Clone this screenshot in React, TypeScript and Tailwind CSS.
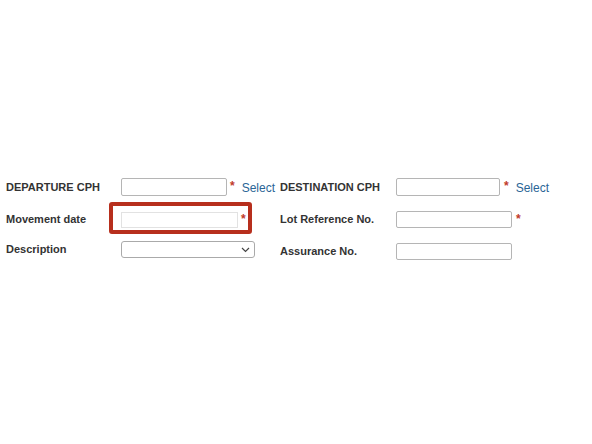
import React from 'react';

const font = { fontFamily: '"Liberation Sans", Arial, sans-serif' };

function Req() {
  return <span className="text-[12px] font-bold leading-none text-[#c0392b]">*</span>;
}

function Select() {
  return <span className="text-[12px] leading-none text-[#2a6596]">Select</span>;
}

function Label({ children, w }: { children: React.ReactNode; w: string }) {
  return (
    <div className={`${w} shrink-0 text-[11px] font-bold leading-none text-[#333]`}>
      {children}
    </div>
  );
}

export default function App() {
  return (
    <div className="min-h-[444px] w-[592px] bg-white pl-[6px] pt-[178px]" style={font}>
      {/* row 1 */}
      <div className="flex h-[18px] items-center">
        <div className="flex w-[274px] items-center">
          <Label w="w-[115px]">DEPARTURE CPH</Label>
          <input className="h-[18px] w-[106px] rounded-[2px] border border-[#b5b5b5] bg-white" />
          <span className="ml-[3px] mt-[-4px]"><Req /></span>
          <span className="ml-[7px]"><Select /></span>
        </div>
        <div className="flex items-center">
          <Label w="w-[116px]">DESTINATION CPH</Label>
          <input className="h-[18px] w-[104px] rounded-[2px] border border-[#b5b5b5] bg-white" />
          <span className="ml-[4px] mt-[-4px]"><Req /></span>
          <span className="ml-[7px]"><Select /></span>
        </div>
      </div>

      {/* row 2 */}
      <div className="mt-[15px] flex h-[17px] items-center">
        <div className="flex w-[274px] items-center">
          <Label w="w-[115px]">Movement date</Label>
          <div className="relative flex items-center">
            <input className="h-[16px] w-[117px] border border-[#e2e2e2] bg-white" />
            <span className="ml-[3px] mt-[-4px]"><Req /></span>
            <div className="pointer-events-none absolute left-[-12px] top-[-8px] h-[32px] w-[143px] rounded-[3px] border-[4px] border-[#b72f1d]" />
          </div>
        </div>
        <div className="flex items-center">
          <Label w="w-[116px]">Lot Reference No.</Label>
          <input className="h-[17px] w-[116px] rounded-[2px] border border-[#b5b5b5] bg-white" />
          <span className="ml-[4px] mt-[-4px]"><Req /></span>
        </div>
      </div>

      {/* row 3 */}
      <div className="mt-[13px] flex h-[19px] items-start">
        <div className="flex h-[17px] w-[274px] items-center">
          <Label w="w-[115px]">Description</Label>
          <div className="flex h-[17px] w-[134px] items-center justify-end rounded-[3px] border border-[#aaaaaa] bg-white pr-[4px]">
            <svg width="9" height="6" viewBox="0 0 9 6" fill="none">
              <path d="M1 1l3.5 3.5L8 1" stroke="#444" strokeWidth="1.2" />
            </svg>
          </div>
        </div>
        <div className="mt-[2px] flex h-[17px] items-center">
          <Label w="w-[116px]">Assurance No.</Label>
          <input className="h-[17px] w-[116px] rounded-[2px] border border-[#b5b5b5] bg-white" />
        </div>
      </div>
    </div>
  );
}
